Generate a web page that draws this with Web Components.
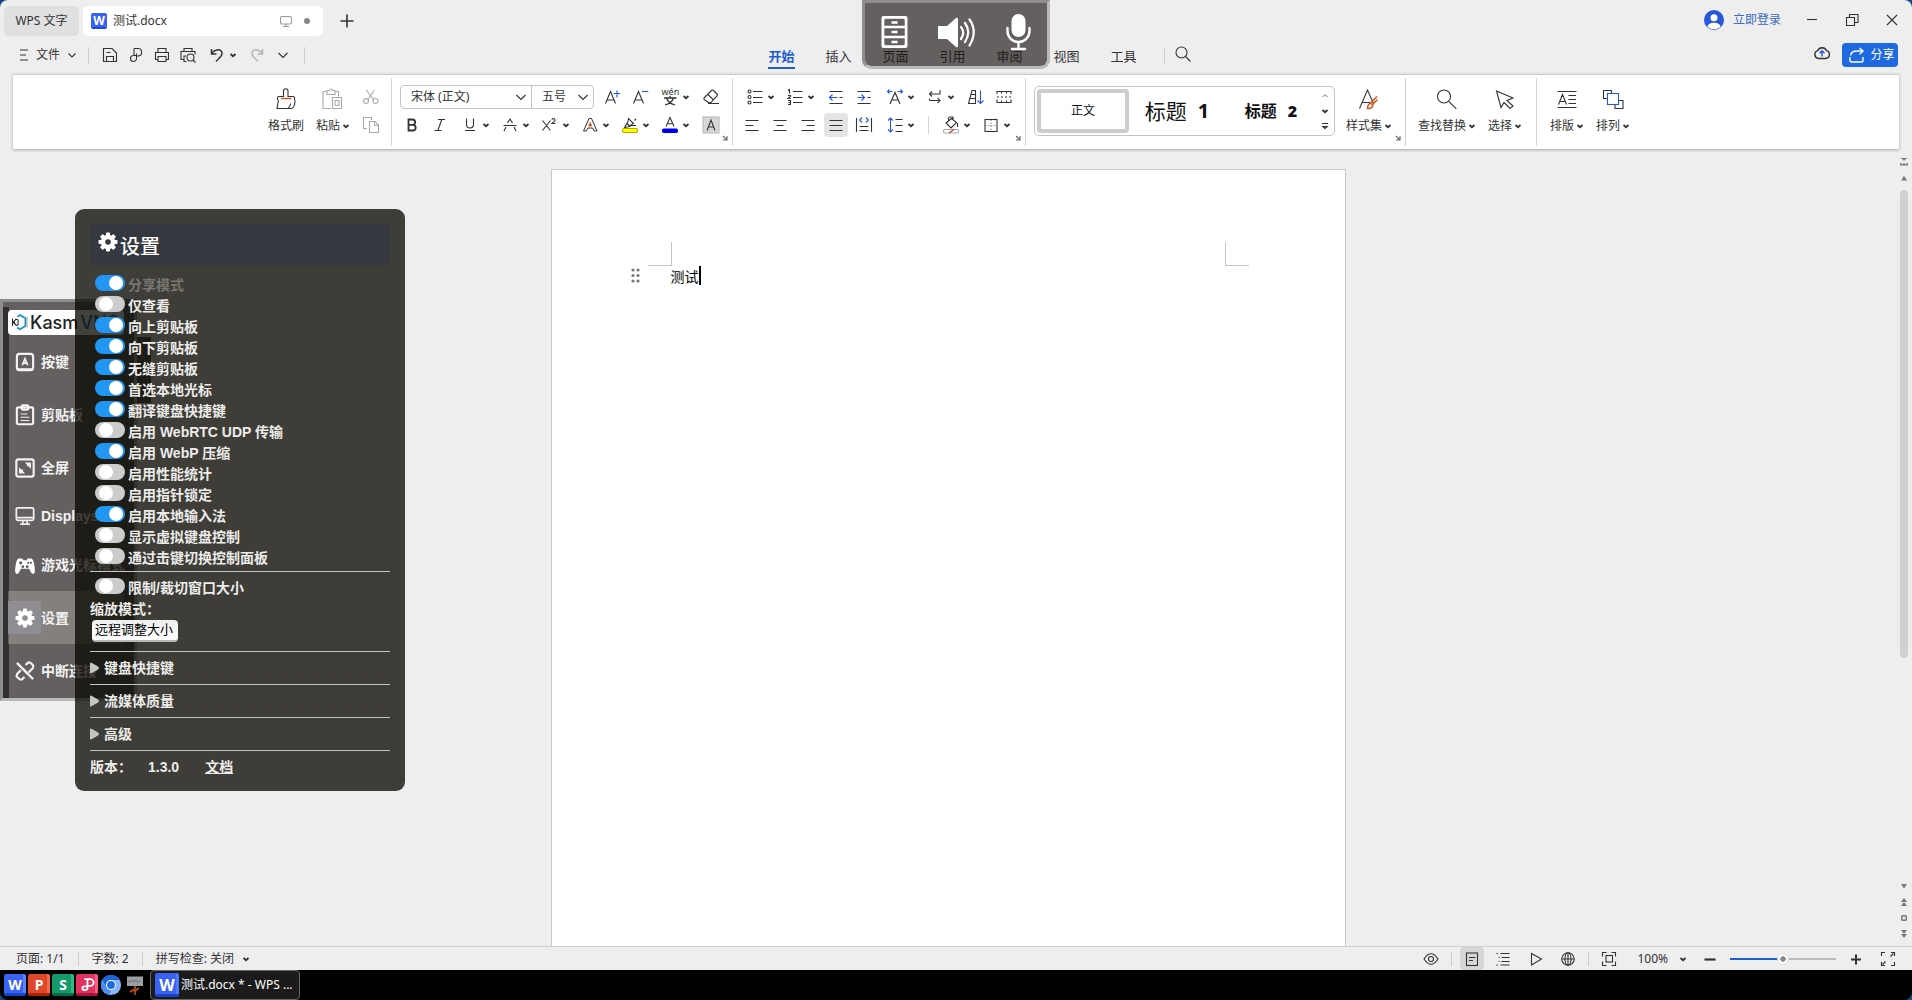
<!DOCTYPE html>
<html lang="zh-CN">
<head>
<meta charset="utf-8">
<title>测试.docx - WPS 文字</title>
<style>
html{height:100%;background:#174a7c}
body{margin:0;height:100%;display:flex;flex-direction:column;overflow:hidden;position:relative;
 font:12px/16px "Noto Sans","Noto Sans CJK SC",sans-serif;color:#333}
</style>
</head>
<body>
<title-bar></title-bar>
<menu-bar></menu-bar>
<tool-ribbon></tool-ribbon>
<doc-area>测试</doc-area>
<status-bar></status-bar>
<task-bar></task-bar>
<media-dock></media-dock>
<kasm-panel></kasm-panel>
<kasm-settings></kasm-settings>

<script>
const B='#2857d8', O='#d2561c';
const ICONS={
 ham:'<path d="M8 7h8M8 12h6M8 17h8"/>',
 chev:'<path d="M8.5 10.5l3.5 3.5 3.5-3.5"/>',
 chevL:'<path d="M7.5 10l4.5 4.5 4.5-4.5"/>',
 drop:'<path d="M9.5 11l2.5 2.2 2.5-2.2" stroke-width="1.8"/>',
 plus:'<path d="M12 5.500v13M5.500 12h13" stroke-width="1.6"/>',
 screen:'<g stroke="#999"><rect x="6.500" y="7.500" width="11" height="7.500" rx="1.500"/><path d="M12 15v2.500M9 17.500h6"/></g>',
 dot:'<circle cx="12" cy="12" r="3" fill="#888" stroke="none"/>',
 save:'<path d="M5.500 5.500h8.500l4.500 4.500v8.500h-13zM8.500 18.500v-5h7v5M8.500 9.500h4"/>',
 link:'<path d="M10 5.500h4.500a3.800 3.800 0 0 1 0 7.500h-2M10 5.500v7M12.500 10.500v5a3 3 0 1 1-3-3h3"/>',
 print:'<path d="M8 9V5.500h8V9M8 16.500H5.500V9.500h13v7H16M8 13.500h8v5H8z"/>',
 preview:'<path d="M8 8.500V5.500h8v3M8 16.500H5V8.500h14v3M10 13H8v5.500h2.500"/><circle cx="14.500" cy="14.500" r="3.500"/><path d="M17 17l2.500 2.500"/>',
 undo:'<path d="M6.500 6v5h5M6.500 11c2-4.500 10-6 10.500-1 .3 3.500-3.500 5.500-6 8.500" stroke-width="1.500"/>',
 redo:'<path d="M17.500 6v5h-5M17.500 11c-2-4.500-10-6-10.500-1-.3 3.500 3.500 5.500 6 8.500" stroke="#b5b5b5" stroke-width="1.500"/>',
 search:'<circle cx="10.500" cy="10.500" r="5.500"/><path d="M14.500 14.500l5 5"/>',
 cloud:'<path d="M8.500 17.500a4 4 0 0 1-.8-7.800 4.800 4.800 0 0 1 8.900 0 4 4 0 0 1-.9 7.800z" stroke-width="1.400"/><path d="M12 15.500V10M9.500 12.200L12 9.800l2.500 2.400" stroke="'+B+'" stroke-width="1.400"/>',
 share:'<path d="M5 14v3.500q0 1.500 1.500 1.500h10q1.500 0 1.500-1.500V14M5.500 12.500C6 9.500 9 8 12 8h5.500M14.500 5l3.500 3-3.500 3.200" stroke-width="1.400"/>',
 user:'<circle cx="12" cy="12" r="10" fill="'+B+'" stroke="none"/><circle cx="12" cy="9.800" r="3.500" fill="#fff" stroke="none"/><path d="M5.500 18.500c1-5 12-5 13 0-3 3.500-10 3.500-13 0z" fill="#fff" stroke="none"/>',
 min:'<path d="M7 11.500h10"/>',
 restore:'<path d="M6.500 9.500h8v8h-8zM9.500 9.500v-3h8.500v8h-3.500"/>',
 close:'<path d="M7 7l10 10M17 7L7 17"/>',
 brush:'<path d="M3.500 13v-2.500q0-1 1.500-1h4.500V4a2.200 2.200 0 0 1 4.500 0v5.500h5q1.500 0 1.500 1V13M4.500 13L3 21.500h14.500q3.500-1 3.500-8.500M14 21.500q2.500-2 2.500-5"/><path d="M7 11.500h10.500" stroke="'+O+'" stroke-width="1.400"/>',
 paste:'<g stroke="#aaa"><path d="M7.500 4.500H3v17h8M18.500 9.500v-5H15M7 3.500h2.500q0-1.500 1.500-1.500t1.500 1.500H15v4H7zM12.500 10.500h9v11h-9zM15 13.500h4v5h-4z"/></g>',
 cut:'<g stroke="#aaa"><path d="M7.500 5l7 10M15.500 5l-7 10"/><circle cx="7" cy="16" r="2.500"/><circle cx="16.500" cy="16" r="2.500"/></g>',
 copy:'<g stroke="#aaa"><path d="M8 15.500H4.500v-11h8V7M10.500 8.500h5.500l3.500 3.500v7.500h-9zM15.500 8.500v4h4"/></g>',
 aplus:'<path d="M4.500 18.500L9.500 6.500l5 12M6.200 15h6.600"/><path d="M16 5.500v7M12.800 8.500h6.500" stroke="'+B+'"/>',
 aminus:'<path d="M4.500 18.500L9.500 6.500l5 12M6.200 15h6.600"/><path d="M12.800 6.500h6.500" stroke="'+B+'"/>',
 pinyin:'<text x="3.500" y="10" font-size="9" font-family="Noto Sans" fill="#333" stroke="none">wén</text><path d="M6 13h12.500M12 11v2M8.500 13q1.500 5 8.500 7M15.500 13q-1.500 5-8.500 7" stroke-width="1.300"/>',
 erase:'<path d="M5 13l7.500-7.500q1-1 2 0l3.500 3.500q1 1 0 2L12 17.500H9.500L5 14.500zM9 9.500l5.500 5.500M9 18.500h11"/>',
 bold:'<path d="M8.500 6.500h4a2.600 2.600 0 0 1 0 5.300h-4zM8.500 11.800h4.800a2.900 2.900 0 0 1 0 5.700H8.500z" stroke-width="1.800"/>',
 ital:'<path d="M10 6.500h7M6.500 17.500h7M13.800 6.500l-4 11"/>',
 under:'<path d="M8.500 5.500v6a3.500 3.500 0 0 0 7 0v-6M7 17.500h10"/>',
 strike:'<path d="M9.500 10L12 6l2.500 4M8 14l-2 4M16 14l2 4M5.500 12.500h13"/>',
 sup:'<path d="M4.500 7.500l8 10M12.500 7.500l-8 10M14 7q0-1.500 1.500-1.500T17 7q0 1-3 3.500h3.500"/>',
 aeff:'<path d="M5.500 18L11 5.500h2.500L19 18h-2.800l-1.500-3H9.800L8.300 18z" stroke-width="1"/><path d="M12.200 9.500l1.500 3.500h-3z" fill="'+O+'" stroke="'+O+'" stroke-width=".8"/>',
 hilite:'<path d="M6.500 14.500l2.500-4 3 3zM9.500 10.500l1-5 5 5-4 2.500M13 12.500h5M18 6l-1.500 1.500"/><rect x="4.500" y="15.500" width="15" height="4" rx="1.500" fill="#ff0" stroke="#b9a900"/>',
 fcolor:'<path d="M8 13.500L12 4.500l4 9M9.300 10.800h5.400"/><rect x="4" y="15.500" width="16" height="4.500" rx="1.800" fill="#0000e8" stroke="none"/>',
 ashade:'<rect x="4" y="4" width="16" height="16" fill="#d6d6d6" stroke="#bbb"/><path d="M8 17.500L12 7l4 10.500M9.400 14h5.200"/>',
 bullets:'<g><circle cx="6.500" cy="6.500" r="1.500"/><circle cx="6.500" cy="12" r="1.500"/><circle cx="6.500" cy="17.500" r="1.500"/><path d="M10 6.500h9.500M10 12.500h9.500M10 17.500h9.500"/></g>',
 nums:'<path d="M10 6.500h9.500M10 12.500h9.500M10 17.500h9.500M5 5.500l1.500-1v4M5 10.500h2.500v1L5 13.500h2.500M5 15.500h2.500v4H5M5.500 17.500h2"/>',
 outd:'<path d="M5.500 6.500h13M5.500 18.500h13M15.500 12.500h3"/><path d="M13.500 12.500h-8M8.500 9.500l-3 3 3 3" stroke="'+B+'"/>',
 ind:'<path d="M5.500 6.500h13M5.500 18.500h13M15.500 12.500h3"/><path d="M5.500 12.500h7M9.500 9.500l3 3-3 3" stroke="'+B+'"/>',
 awide:'<path d="M7 19l5-11.500L17 19M8.700 15h6.600"/><path d="M4.500 6.500h5M6.500 4.500l-2 2 2 2M19.500 6.500h-5M17.500 4.500l2 2-2 2" stroke="'+B+'"/>',
 wrap:'<path d="M17 5v4H6.500M9 6.500L6.500 9 9 11.500M6.500 15.500H17M14.500 12.800l2.500 2.700-2.500 2.700M6.500 15.500v-2"/>',
 sort:'<path d="M8 5.500h3.500v13h-7zM7.500 9.500h4M6.500 13.500h5"/><path d="M16.500 5.500v13M13.500 15.500l3 3 3-3" stroke="'+B+'"/>',
 ruler:'<path d="M5 9V6.500h14V9M5 14.500v3h14v-3M5 12h2M9 12h2M13 12h2M17 12h2M9.500 6.500v2M14.500 6.500v2M9.500 17.500v-2M14.500 17.500v-2"/>',
 left:'<path d="M5.500 7.500h13M5.500 12.500h8M5.500 17.500h13"/>',
 center:'<path d="M5.500 7.500h13M8.500 12.500h7M5.500 17.500h13"/>',
 right:'<path d="M5.500 7.500h13M10.500 12.500h8M5.500 17.500h13"/>',
 just:'<path d="M5.500 7.500h13M5.500 12.500h13M5.500 17.500h13"/>',
 dist:'<path d="M4.500 5v14M19.500 5v14M7.500 13.500h9M7.500 17.500h9"/><path d="M10 4.500L7.500 7l2.500 2.500M14 4.500L16.500 7 14 9.500" stroke="'+B+'"/>',
 lsp:'<path d="M12.500 6.500h7M12.500 12.500h7M12.500 18.500h7"/><path d="M7.500 5v14M5 7.500L7.500 5 10 7.500M5 16.500L7.500 19l2.500-2.500" stroke="'+B+'"/>',
 bucket:'<path d="M7 10l5.500-4.500 5 4-5.500 5.500zM9.500 8V5.500q0-1.500 1.500-1.500h3v3M18.500 10v4"/><rect x="4.500" y="16.500" width="15" height="3.500" rx="1.500" stroke="#aaa"/><path d="M10 20l5-3.500" stroke="#d33"/>',
 borders:'<path d="M12 6.500v12M6 12.500h12" stroke-dasharray="1.500 1.500" stroke="#999"/><rect x="6" y="6.500" width="12" height="12"/>',
 corner:'<path d="M10 10l3.500 3.500M14 10v4h-4" stroke="#666"/>',
 aset:'<path d="M3.500 21.500L11.500 3l6 13.500M6 15.500h8"/><path d="M21 9.500l-7 7M21.500 12.500l-5 5M11.500 21.500c0-4 2-6 4.500-4.500 2 2-.5 5-4.500 4.500z" stroke="'+O+'" stroke-width="1.500"/>',
 find:'<circle cx="10" cy="9.500" r="6.500"/><path d="M14.800 14.300l7.500 7.500"/>',
 pick:'<path d="M3.500 4l16.500 7-6 2.500 6 5.500-3 2.500-6-6-3 5z"/>',
 layout:'<path d="M2.500 4.500h19M2.500 20.500h19M3.500 17.500l4-10 4 10M5 14.500h5.500M13.500 8.500h7.500M13.500 12.500h7.500M13.500 16.500h7.500"/>',
 arrange:'<path d="M10.500 6V3.500h-8v8H6M18 13.500h4v8h-8V18"/><rect x="6.500" y="6.500" width="11" height="11" stroke="'+B+'"/>',
 up:'<path d="M9.500 13l2.500-2.200 2.500 2.200" stroke="#aaa"/>',
 more:'<path d="M9 9.500h6M9.800 12.500l2.200 2 2.200-2z" stroke-width="1.200"/>',
 eye:'<path d="M5 12q7-10.500 14 0-7 10.500-14 0z"/><circle cx="12" cy="12" r="2.500"/>',
 vdoc:'<rect x="6.500" y="6" width="11" height="12.500"/><path d="M9 10.500h6.500M9 13.500h4"/>',
 vout:'<path d="M9.500 6.500h9M10.500 10.500h8M10.500 14.500h8M9.500 18h9"/><path d="M5.500 6.500h1.500M5.500 18h1.500M7.500 10.500h1M7.500 14.500h1"/>',
 play:'<path d="M7.500 6.500v11.500L17.500 12z"/>',
 globe:'<circle cx="12" cy="12" r="6.200"/><ellipse cx="12" cy="12" rx="3" ry="6.200"/><path d="M5.800 12h12.400M12 5.800v12.400"/>',
 frame:'<path d="M5.500 9.500v-4h4M14.500 5.500h4v4M18.500 14.500v4h-4M9.500 18.500h-4v-4"/><rect x="9" y="8.500" width="6.500" height="6.500"/>',
 minus:'<path d="M6.500 12.500h11" stroke-width="2.200"/>',
 plus2:'<path d="M7 12.500h10M12 7.500v10" stroke-width="2"/>',
 full:'<path d="M5.500 9V5.500H9M15 5.500h3.500V9M18.500 15v3.500H15M9 18.500H5.500V15M14.500 9.500l3-3M9.500 14.500l-3 3"/>',
 s_top:'<path d="M9 8h6v1h-1.500l-1.500 2-1.500-2H9zM8 15.500v-2.500h1.500v1.200h1.800v-1.200h1.500v1.200h1.700v-1.200H16v2.500z" fill="#777" stroke="none"/>',
 s_up:'<path d="M9 14.500h6l-1-2h-.5L12 9.500 10.500 12.500z" fill="#777" stroke="none"/>',
 s_down:'<path d="M9 10h6l-3 4.500z" fill="#777" stroke="none"/>',
 s_dup:'<path d="M9 12l3-4 3 4zM9 16l3-4 3 4z" fill="#777" stroke="none"/>',
 s_sq:'<rect x="9.800" y="9.800" width="4.500" height="4.500" rx="1" stroke="#777" stroke-width="1.500"/>',
 s_ddn:'<path d="M9 8h6l-3 4zM9 12h6l-3 4z" fill="#777" stroke="none"/>',
 drawers:'<rect x="7.500" y="5" width="24" height="30" rx="1" stroke="#fff" stroke-width="2"/><g stroke="#fff" stroke-width="2.400"><rect x="8.500" y="6" width="22" height="28" rx="2.500" stroke-width="1.500"/><path d="M8 15h23M8 25h23"/><path d="M16.500 10.500h6M16.500 20h6M16.500 30h6"/></g>',
 speaker:'<path d="M1 14h9l9-8q2-1 2 1v27q0 2-2 1l-9-8H1z" fill="#fff" stroke="none"/><g stroke="#fff" stroke-width="2.200" stroke-linecap="round"><path d="M24 15q4.500 5.500 0 12M28 11q6.500 9 0 19M32.500 7.500q8.500 12 0 26"/></g>',
 mic:'<rect x="12.500" y="2" width="14" height="23" rx="7" fill="#fff" stroke="none"/><path d="M8.500 16v3a11 11 0 0 0 22 0v-3M19.500 30v6M13 37h13" stroke="#fff" stroke-width="2.400" stroke-linecap="round"/>',
 kkeys:'<rect x="4.500" y="4.500" width="15" height="15" rx="2.500"/><path d="M5 19h14" stroke-width="2.500"/><path d="M9.500 15L12 9l2.500 6M10.500 13h3" stroke-width="1.600"/>',
 kclip:'<rect x="4.500" y="5" width="15" height="15.500" rx="1.500"/><rect x="9" y="3" width="6" height="4" rx="1"/><path d="M8 11h6M8 14h8M8 17h8" stroke-width="1"/>',
 kfull:'<rect x="4" y="4" width="16" height="16" rx="2"/><path d="M13 7.500h4v4zM11 16.500H7v-4z" fill="#fff" stroke-width="1"/><path d="M8 15.500l2-2M14 10l2-2" stroke-width="1.500"/>',
 kdisp:'<rect x="4" y="4.500" width="16" height="11.500" rx="1.500" stroke-width="1.600"/><path d="M4 13.500h16M10 16.500v2.500M14 16.500v2.500M7.500 19.500h9" stroke-width="1.500"/>',
 kgame:'<path d="M6.500 6h3l1 1.500h3l1-1.500h3q2 0 3 5.500 1.500 7.500-.5 8.500-1.500 1-3-2l-1.200-2.500H8.200L7 18q-1.500 3-3 2-2-1-.5-8.500 1-5.500 3-5.500z" fill="#fff" stroke="none"/><g fill="#645f5e" stroke="none"><circle cx="8" cy="10" r="1.500"/><circle cx="15" cy="10" r="1"/><circle cx="17.500" cy="10" r="1"/><circle cx="14" cy="13.500" r="1.300"/><circle cx="10" cy="13.500" r="1.300"/></g>',
 gear:'<g fill="#fff" stroke="none">'+[0,45,90,135].map(a=>'<rect x="10" y="2.500" width="4" height="19" rx=".8" transform="rotate('+a+' 12 12)"/>').join('')+'</g><circle cx="12" cy="12" r="5" stroke="#fff" stroke-width="4.500"/><circle cx="12" cy="12" r="2.800" fill="var(--hole,#8f8c92)" stroke="none"/>',
 kcut:'<path d="M12.500 6.500l2-2q1.500-1 3 .3l1.500 1.500q1.300 1.500.3 3l-4 4M11.500 17.500l-2 2q-1.500 1-3-.3l-1.500-1.500q-1.300-1.500-.3-3l3.500-3.500M10 10l4 4" stroke-width="2"/><path d="M4.500 4.500l15 15" stroke-width="2"/>',
 hex:'<path d="M9 4.500l3-2 6.500 3.700v9.500L12 19.500l-3.500-2" stroke="#1d93c8" stroke-width="2.200"/><path d="M3 6.500v9M3 11h3M7.500 7L3.800 11l4 4M7 7.500q4 0 2.500 3.500 1.500 4-2.500 4" stroke="#222" stroke-width="1.300"/><path d="M20.500 4.500v13" stroke="#999"/>',
 chromium:'<circle cx="12" cy="12" r="11" fill="#8ab4f8" stroke="none"/><path d="M2.500 6.500A11 11 0 0 1 21.500 6.500H12A5.500 5.500 0 0 0 7 14.500z" fill="#1a66d6" stroke="none"/><path d="M2.500 6.500L7.200 14.700Q9 17.500 12 17.500L10 22.800A11 11 0 0 1 2.500 6.500z" fill="#4a8cf0" stroke="none"/><circle cx="12" cy="12" r="5.400" fill="#fff" stroke="none"/><circle cx="12" cy="12" r="4.300" fill="#1f6be0" stroke="none"/>',
 sign:'<rect x="4" y="3.500" width="16" height="9.500" fill="#9aa0a3" stroke="none"/><path d="M5 8l2 1 2-2 2 2 2-2 2 2 2-1" stroke="#777" /><path d="M12 13v9" stroke="#7c4a1c" stroke-width="2.200"/><path d="M7 19l3-2 2 1 4-3" stroke="#d8401a" stroke-width="1.800"/>',
 pdf:'<path d="M9 17.500a2 2 0 1 1 0-4h3.500V5.500h3a3.500 3.500 0 0 1 0 7.500H12.500v2.500q0 2-3.500 2M9 5.500h3" stroke="#fff" stroke-width="2"/>'
};
const define=(tag,css,html,init)=>customElements.define(tag,class extends HTMLElement{
 constructor(){super();this.attachShadow({mode:'open'});}
 connectedCallback(){
  if(this.shadowRoot.firstChild)return;
  const t=document.createElement('template');
  t.innerHTML='<style>:host,*{box-sizing:border-box}button{font:inherit;color:inherit;background:none;border:0;padding:0;margin:0}'+css+'</style>'+(typeof html==='function'?html(this):html);
  this.shadowRoot.append(t.content.cloneNode(true));
  if(init)init(this);
 }});

define('ui-icon',':host{display:inline-block;flex:none;line-height:0}svg{display:block;fill:none;stroke:currentColor;stroke-width:var(--sw,1.1)}',
 e=>{const s=+(e.getAttribute('size')||24),v=e.getAttribute('box')||24;return `<svg width="${s}" height="${s}" viewBox="0 0 ${v} ${v}" aria-hidden="true">${ICONS[e.getAttribute('name')]}</svg>`});

/* small toolbar button, optionally with a drop arrow */
define('tool-button',`:host{display:block}
 button{display:flex;align-items:center;justify-content:center;width:28px;height:24px;border-radius:4px}
 .on{width:24px;margin:0 2px;background:#e4e4e4}
 .dd{width:40px;justify-content:flex-start;padding-left:3px}
 .dd ui-icon+ui-icon{margin-left:-8px;margin-right:-8px}`,
 e=>{const d=e.hasAttribute('drop');return `<button class="${d?'dd':''} ${e.hasAttribute('on')?'on':''}" aria-label="${e.getAttribute('icon')}"><ui-icon name="${e.getAttribute('icon')}"></ui-icon>${d?'<ui-icon name="drop"></ui-icon>':''}</button>`});

/* tall ribbon button: picture above a caption */
define('big-button',`:host{display:block}
 button{display:flex;flex-direction:column;align-items:center;gap:6px;white-space:nowrap}
 span{display:flex;align-items:center;height:18px;line-height:18px}
 span ui-icon{margin:0 -9px 0 -6px}`,
 e=>`<button><ui-icon name="${e.getAttribute('icon')}"></ui-icon><span><slot></slot>${e.hasAttribute('drop')?'<ui-icon name="drop"></ui-icon>':''}</span></button>`);

define('ribbon-group',`:host{display:flex;align-items:center;position:relative;height:74px;padding-bottom:3px;border-right:1px solid;border-image:linear-gradient(transparent 4px,#d4d4d4 4px,#d4d4d4 70px,transparent 70px) 1}
 :host([last]){border:0}
 button{position:absolute;right:-5px;bottom:-5px}`,
 e=>`<slot></slot>${e.hasAttribute('launch')?'<button aria-label="更多设置"><ui-icon name="corner"></ui-icon></button>':''}`);

define('title-bar',`:host{display:flex;align-items:flex-end;height:36px;flex:none;background:#eee;border-radius:8px 8px 0 0;padding-left:4px}
 button{height:30px;display:flex;align-items:center}
 .home{width:75px;justify-content:center;background:#e0e0e0;border-radius:5px;margin-right:4px}
 .tab{width:240px;background:#fff;border-radius:5px;padding:0 4px 0 8px}
 .tab span{flex:1;text-align:left;margin-left:6px}
 .tab ui-icon+ui-icon{margin-left:-3px}
 app-mark{--s:16px}
 .add{width:48px;justify-content:center}
 .sp{flex:1}
 .login{color:#3a6cc4;gap:7px;margin-right:11px}
 .w{width:40px;justify-content:center}
 .r{display:flex;align-self:flex-start;padding-top:5px}`,
 `<button class="home">WPS 文字</button>
 <button class="tab"><app-mark c="#3a62f5" d="#1c4de0">W</app-mark><span>测试.docx</span><ui-icon name="screen"></ui-icon><ui-icon name="dot"></ui-icon></button>
 <button class="add" aria-label="新建"><ui-icon name="plus"></ui-icon></button><div class="sp"></div>
 <div class="r"><button class="login"><ui-icon name="user"></ui-icon>立即登录</button>
 <button class="w" aria-label="最小化"><ui-icon name="min"></ui-icon></button><button class="w" aria-label="还原"><ui-icon name="restore"></ui-icon></button><button class="w" aria-label="关闭"><ui-icon name="close"></ui-icon></button></div>`);

/* square app badge with a white letter */
define('app-mark',`:host{display:flex;flex:none;align-items:center;justify-content:center;width:var(--s);height:var(--s);border-radius:2px;color:#fff;font-weight:700;overflow:hidden;line-height:1}`,
 '<slot></slot>',e=>{const c=e.getAttribute('c'),d=e.getAttribute('d'),l=e.getAttribute('l')||c;
  e.style.background=`linear-gradient(to top,${d} 12%,transparent 12%),linear-gradient(to left,${l} 14%,${c} 14%)`;});

define('menu-bar',`:host{display:grid;grid-template-columns:1fr auto 1fr;align-items:center;height:38px;flex:none;background:#eee}
 .l,.c,.r{display:flex;align-items:center}
 .l{padding-left:12px}.l button{display:flex;align-items:center}
 .q{width:26px;justify-content:center}
 tool-button{margin:0 2px 0 1px}
 i{width:1px;height:17px;background:#cfcfcf}
 .c{padding-left:36px;font-size:13px}
 nav{display:flex}
 a{width:57px;text-align:center;color:inherit;text-decoration:none;line-height:22px;padding-top:4px}
 a span{display:inline-block;border-bottom:2px solid transparent}
 .on{color:#1c5fd0;font-weight:700}.on span{border-color:#1c5fd0}
 .r{justify-content:flex-end;gap:8px;padding-right:14px}
 .share{display:flex;align-items:center;justify-content:center;gap:1px;width:56px;height:24px;background:#1f69e0;color:#fff;border-radius:4px}`,
 `<div class="l"><button><ui-icon name="ham"></ui-icon>文件<ui-icon name="chev"></ui-icon></button><i style="margin:0 8px 0 4px"></i>
 <button class="q" aria-label="保存"><ui-icon name="save"></ui-icon></button><button class="q" aria-label="链接"><ui-icon name="link"></ui-icon></button><button class="q" aria-label="打印"><ui-icon name="print"></ui-icon></button><button class="q" aria-label="预览"><ui-icon name="preview"></ui-icon></button>
 <tool-button icon="undo" drop></tool-button><button class="q" aria-label="重做"><ui-icon name="redo"></ui-icon></button><button class="q" aria-label="更多"><ui-icon name="chevL"></ui-icon></button><i style="margin-left:8px"></i></div>
 <div class="c"><nav><a href="#" class="on"><span>开始</span></a><a href="#"><span>插入</span></a><a href="#"><span>页面</span></a><a href="#"><span>引用</span></a><a href="#"><span>审阅</span></a><a href="#"><span>视图</span></a><a href="#"><span>工具</span></a></nav><i style="margin:0 6px 0 12px"></i><button aria-label="搜索"><ui-icon name="search"></ui-icon></button></div>
 <div class="r"><button aria-label="云端"><ui-icon name="cloud"></ui-icon></button><button class="share"><ui-icon name="share"></ui-icon>分享</button></div>`);

const tb=s=>s.split(' ').map(n=>n.endsWith('+')?`<tool-button icon="${n.slice(0,-1)}" drop></tool-button>`:n.endsWith('!')?`<tool-button icon="${n.slice(0,-1)}" on></tool-button>`:`<tool-button icon="${n}"></tool-button>`).join('');
define('tool-ribbon',`:host{display:flex;flex:none;height:75px;background:#eee;position:relative;z-index:1}
 .bar{flex:1;margin:0 13px;display:flex;justify-content:center;background:#fff;border-top:1px solid #d0d0d0;box-shadow:0 1px 3px rgba(0,0,0,.3)}
 .rows{display:flex;flex-direction:column;gap:4px}
 .row{display:flex;gap:2px;height:24px}.row>div{display:flex}
 .clip{display:flex;align-items:center;padding:0 6px 0 8px;gap:12px}.clip .rows{margin-left:-4px}
 .font{padding:0 7px 0 6px}.font .row{gap:1px}.font .row>div:last-child{margin-left:1px}
 .para{padding:0 7px 0 5px}.para .row:first-child{padding-left:2px}
 .style{display:flex;align-items:center;gap:11px;padding:0 14px 0 8px}
 .big{display:flex;gap:13px;padding:0 15px 0 12px}
 .end{padding:0 23px 0 13px}
 .combo{display:flex;border:1px solid #c4c4c4;border-radius:4px;margin:0 4px 0 2px;width:194px}
 .combo label{display:flex;align-items:center;flex:1;position:relative}
 .combo label+label{border-left:1px solid #c4c4c4;flex:0 0 62px}
 select{appearance:none;border:0;background:none;font:inherit;color:#333;flex:1;width:100%;padding:0 0 0 10px;outline:0}
 label ui-icon{margin:0 -2px 0 -20px;pointer-events:none}
 i{width:1px;height:18px;background:#d4d4d4;margin:3px 5px 3px 6px}
 .gal{display:flex;gap:2px;width:301px;height:50px;border:1px solid #c4c4c4;border-radius:5px;padding:2px}
 .gal>button{flex:none;width:92px;display:flex;align-items:center;justify-content:center;gap:11px;color:#111;white-space:nowrap}
 .gal .s{border:4px solid #ccc;border-radius:4px}
 .h1{font-size:21px}.h1 b{font-size:20px}.h2{font-size:16px;font-weight:700}
 .ar{flex:1;min-width:0;display:flex;flex-direction:column;justify-content:space-between}.ar button{height:14px;display:flex;align-items:center;justify-content:center}`,
 `<div class="bar">
 <ribbon-group><div class="clip"><big-button icon="brush">格式刷</big-button><big-button icon="paste" drop>粘贴</big-button><div class="rows">${tb('cut copy')}</div></div></ribbon-group>
 <ribbon-group launch><div class="rows font"><div class="row"><div class="combo"><label><select aria-label="字体"><option>宋体 (正文)</option></select><ui-icon name="chevL"></ui-icon></label><label><select aria-label="字号"><option>五号</option></select><ui-icon name="chevL"></ui-icon></label></div><div>${tb('aplus aminus pinyin+')}</div><div>${tb('erase')}</div></div>
 <div class="row"><div>${tb('bold ital')}</div><div>${tb('under+ strike+ sup+ aeff+ hilite+ fcolor+')}</div><div>${tb('ashade')}</div></div></div></ribbon-group>
 <ribbon-group launch><div class="rows para"><div class="row"><div>${tb('bullets+ nums+')}</div><div>${tb('outd ind')}</div><div>${tb('awide+ wrap+')}</div><div>${tb('sort ruler')}</div></div>
 <div class="row"><div>${tb('left center right just! dist')}</div><div>${tb('lsp+')}</div><i></i><div>${tb('bucket+ borders+')}</div></div></div></ribbon-group>
 <ribbon-group launch><div class="style"><div class="gal"><button class="s">正文</button><button class="h1">标题<b>1</b></button><button class="h2">标题<b>2</b></button><div class="ar"><button aria-label="上"><ui-icon name="up"></ui-icon></button><button aria-label="下"><ui-icon name="drop"></ui-icon></button><button aria-label="展开"><ui-icon name="more"></ui-icon></button></div></div><big-button icon="aset" drop>样式集</big-button></div></ribbon-group>
 <ribbon-group><div class="big"><big-button icon="find" drop>查找替换</big-button><big-button icon="pick" drop>选择</big-button></div></ribbon-group>
 <ribbon-group last><div class="big end"><big-button icon="layout" drop>排版</big-button><big-button icon="arrange" drop>排列</big-button></div></ribbon-group>
 </div>`);

define('doc-area',`:host{display:flex;flex:1;min-height:0;background:#eee}
 .v{flex:1;display:flex;justify-content:center;padding-top:20px}
 .p{width:795px;background:#fff;border:1px solid #c8c8c8;border-bottom:0;padding:72px 96px 0}
 .m{display:flex;justify-content:space-between}
 .m b{width:24px;height:24px;border:0 solid #c4c4c4;border-width:0 1px 1px 0}.m b+b{border-width:0 0 1px 1px}
 .t{display:flex;align-items:center;height:19px;font:14px/18px "Noto Sans CJK SC",sans-serif;color:#000}
 .t svg{margin:0 30px 0 -17px;flex:none}
 .t u{width:2px;height:19px;background:#000}
 .s{width:16px;display:flex;flex-direction:column;align-items:center}
 .s ui-icon{height:16px;display:flex;align-items:center}
 .th{width:8px;height:468px;border-radius:4px;background:#cfcfcf;margin-top:4px}
 .g{flex:1}`,
 `<div class="v"><div class="p"><div class="m"><b></b><b></b></div><div class="t"><svg width="10" height="16" fill="#777"><circle cx="2" cy="2" r="1.600"/><circle cx="7" cy="2" r="1.600"/><circle cx="2" cy="7.500" r="1.600"/><circle cx="7" cy="7.500" r="1.600"/><circle cx="2" cy="13" r="1.600"/><circle cx="7" cy="13" r="1.600"/></svg><slot></slot><u></u></div></div></div>
 <div class="s"><ui-icon name="s_top" style="margin-top:5px"></ui-icon><ui-icon name="s_up"></ui-icon><div class="th"></div><div class="g"></div><ui-icon name="s_down"></ui-icon><ui-icon name="s_dup"></ui-icon><ui-icon name="s_sq"></ui-icon><ui-icon name="s_ddn" style="margin-bottom:4px"></ui-icon></div>`);

define('status-bar',`:host{display:flex;align-items:center;flex:none;height:24px;background:#eee;border-top:1px solid #d0d0d0;padding:0 12px 0 16px}
 i{width:1px;height:14px;background:#ccc;margin:0 13px}
 .sp{flex:1}button{display:flex;align-items:center;justify-content:center;height:23px}
 .on{background:#d6d6d6;border-radius:4px}
 input{appearance:none;width:106px;height:16px;margin:0 8px;background:linear-gradient(to right,#1c5fd0 50%,#bbb 50%) center/100% 2px no-repeat}
 input::-webkit-slider-thumb{appearance:none;width:12px;height:12px;border-radius:50%;background:radial-gradient(circle,#888 2.500px,#fff 3px);border:1px solid #ddd}`,
 `<span>页面: 1/1</span><i></i><span>字数: 2</span><i></i><button>拼写检查: 关闭<ui-icon name="drop"></ui-icon></button><div class="sp"></div>
 <button aria-label="护眼"><ui-icon name="eye"></ui-icon></button><i style="margin:0 8px"></i><button class="on" aria-label="页面视图"><ui-icon name="vdoc"></ui-icon></button><button aria-label="大纲" style="margin:0 9px 0 7px"><ui-icon name="vout"></ui-icon></button><button aria-label="阅读"><ui-icon name="play"></ui-icon></button><button aria-label="Web" style="margin-left:8px"><ui-icon name="globe"></ui-icon></button><i style="margin:0 8px"></i><button aria-label="适应"><ui-icon name="frame"></ui-icon></button>
 <button style="margin:0 3px 0 16px;gap:3px">100%<ui-icon name="drop"></ui-icon></button><button aria-label="缩小"><ui-icon name="minus"></ui-icon></button><input type="range" aria-label="缩放" value="50"><button aria-label="放大"><ui-icon name="plus2"></ui-icon></button><button aria-label="全屏" style="margin-left:8px"><ui-icon name="full"></ui-icon></button>`);

define('task-bar',`:host{display:flex;align-items:center;flex:none;height:30px;background:#000;border-radius:0 0 8px 8px;padding-left:4px;color:#fff}
 app-mark{--s:22px;font-size:14px}
 .l{display:flex;align-items:center;gap:2px;width:146px}
 .l ui-icon+ui-icon{margin-left:-1px}
 .t{display:flex;align-items:center;gap:2px;width:150px;height:30px;padding-left:4px;background:#1b1b1b;border:1px solid #666;border-radius:4px;white-space:nowrap}
 .t app-mark{--s:24px;font-size:16px}`,
 `<div class="l"><app-mark c="#3a62f5" d="#1744c8" l="#5a84ff">W</app-mark><app-mark c="#e0472a" d="#a8230e" l="#f06a4c">P</app-mark><app-mark c="#149a68" d="#0a6b48" l="#34b888">S</app-mark><app-mark c="#e0335f" d="#ab1440" l="#ff5c85"><ui-icon name="pdf" size="22"></ui-icon></app-mark><ui-icon name="chromium" size="22"></ui-icon><ui-icon name="sign"></ui-icon></div>
 <button class="t"><app-mark c="#3a62f5" d="#1744c8" l="#4a78ff">W</app-mark>测试.docx * - WPS ...</button>`);

/* remote-desktop dock over the top edge of the window */
define('media-dock',`:host{position:absolute;z-index:3;top:0;left:50%;margin-left:-94px;width:188px;height:69px;display:flex;justify-content:center;align-items:flex-start;gap:23px;background:rgba(26,20,18,.65);background-clip:padding-box;border:3px solid;border-color:#8f8d8d #bab8b8 #bab8b8 #8f8d8d;border-radius:0 0 9px 9px;padding-top:9px}`,
 `<button aria-label="文件"><ui-icon name="drawers" size="39" box="39"></ui-icon></button><button aria-label="声音"><ui-icon name="speaker" size="39" box="39"></ui-icon></button><button aria-label="麦克风"><ui-icon name="mic" size="39" box="39"></ui-icon></button>`);

define('kasm-panel',`:host{position:absolute;z-index:3;left:0;top:299px;display:flex;align-items:flex-start;font:bold 14px/20px "Liberation Sans","Noto Sans CJK SC",sans-serif;color:#f2f2f2}
 .p{width:137px;background:rgba(26,20,18,.65);background-clip:padding-box;border:3px solid;border-color:#8f8d8d #bab8b8 #bab8b8 #8f8d8d;border-radius:0 0 8px 0;display:flex}
 .e{width:6px;background:rgba(0,0,0,.5);margin-top:5px}
 .b{width:116px;margin:8px 0 1px -1px}
 .lg{display:flex;align-items:center;height:25px;background:#fff;border-radius:4px;padding-left:2px;color:#222;font:500 18px/25px Inter,sans-serif}
 .lg em{font-style:normal;color:#0e7fae;margin-left:2px}
 button{display:flex;align-items:center;width:100%;height:53px;text-align:left;white-space:nowrap;--sw:2}
 button ui-icon{width:33px;height:33px;display:flex;align-items:center;justify-content:center}
 .d{height:44px}
 .on{background:rgba(190,190,185,.35)}.on ui-icon{background:#8f8c92}
 .h{width:14px;height:66px;margin-top:38px;background:rgba(26,20,18,.65)}`,
 `<div class="p"><div class="e"></div><div class="b"><div class="lg"><ui-icon name="hex" size="20"></ui-icon>Kasm<em>VNC</em></div>
 ${[['kkeys','按键'],['kclip','剪贴板'],['kfull','全屏'],['kdisp','Displays'],['kgame','游戏光标模式'],['gear','设置'],['kcut','中断连接']].map(([i,t])=>`<button class="${i==='gear'?'on':i==='kdisp'?'d':''}"><ui-icon name="${i}" size="${i==='gear'?24:26}"></ui-icon>${t}</button>`).join('')}</div></div><div class="h"></div>`);

define('switch-row',`:host{display:block}
 label{display:flex;gap:3px;height:21px;line-height:21px;padding-left:5px;white-space:nowrap}
 input{appearance:none;margin:0;width:30px;height:16px;border-radius:8px;background:#ccc;display:flex;align-items:center;padding-left:4px;flex:none}
 input::before{content:"";width:14px;height:14px;border-radius:50%;background:#fff}
 input:checked{background:#2196f3;padding-left:14px}
 :host([off]) span{color:#77766f}`,
 e=>`<label><input type="checkbox" ${e.hasAttribute('on')?'checked':''}><span><slot></slot></span></label>`);

define('kasm-settings',`:host{position:absolute;z-index:4;left:75px;top:209px;width:330px;padding:15px 15px 8px;background:rgba(9,8,0,.77);border-radius:9px;font:bold 14px/21px "Liberation Sans","Noto Sans CJK SC",sans-serif;color:#ececea}
 h2{display:flex;align-items:flex-start;margin:0 0 10px;height:41px;padding:6px 0 0 6px;background:#363840;border-radius:4px;font-size:20px;line-height:34px;font-weight:500;color:#fff;--hole:#363840}
 hr{margin:2px 0 6px;border:0;border-top:1px solid #c4c4c0}
 hr.n{margin:0}
 select{display:block;appearance:none;height:22px;margin:0 0 9px 2px;padding:0 3px;border:0;border-radius:4px;border-bottom:2px solid #b8b8b8;background:linear-gradient(#eee,#fff);font:13px/20px "Liberation Sans","Noto Sans CJK SC",sans-serif;color:#000;width:86px}
 summary{display:flex;align-items:center;gap:5px;height:32px;list-style:none}
 .v{display:flex;align-items:center;height:32px}
 .v b{margin:0 26px 0 16px}.v a{color:inherit}`,
 `<h2><ui-icon name="gear"></ui-icon>设置</h2>
 ${[['分享模式','on off'],['仅查看',''],['向上剪贴板','on'],['向下剪贴板','on'],['无缝剪贴板','on'],['首选本地光标','on'],['翻译键盘快捷键','on'],['启用 WebRTC UDP 传输',''],['启用 WebP 压缩','on'],['启用性能统计',''],['启用指针锁定',''],['启用本地输入法','on'],['显示虚拟键盘控制',''],['通过击键切换控制面板','']].map(([t,a])=>`<switch-row ${a}>${t}</switch-row>`).join('')}
 <hr><switch-row>限制/裁切窗口大小</switch-row><label for="sc">缩放模式：</label><select id="sc"><option>远程调整大小</option></select>
 ${['键盘快捷键','流媒体质量','高级'].map(t=>`<hr class="n"><details><summary><svg width="9" height="12" fill="#c4c4c0"><path d="M0 1.500Q0 0 2 1l6 3.500q2 1.500 0 3L2 11Q0 12 0 10.500z"/></svg>${t}</summary></details>`).join('')}
 <hr class="n"><div class="v">版本：<b>1.3.0</b><a href="#">文档</a></div>`);
</script>
</body>
</html>
